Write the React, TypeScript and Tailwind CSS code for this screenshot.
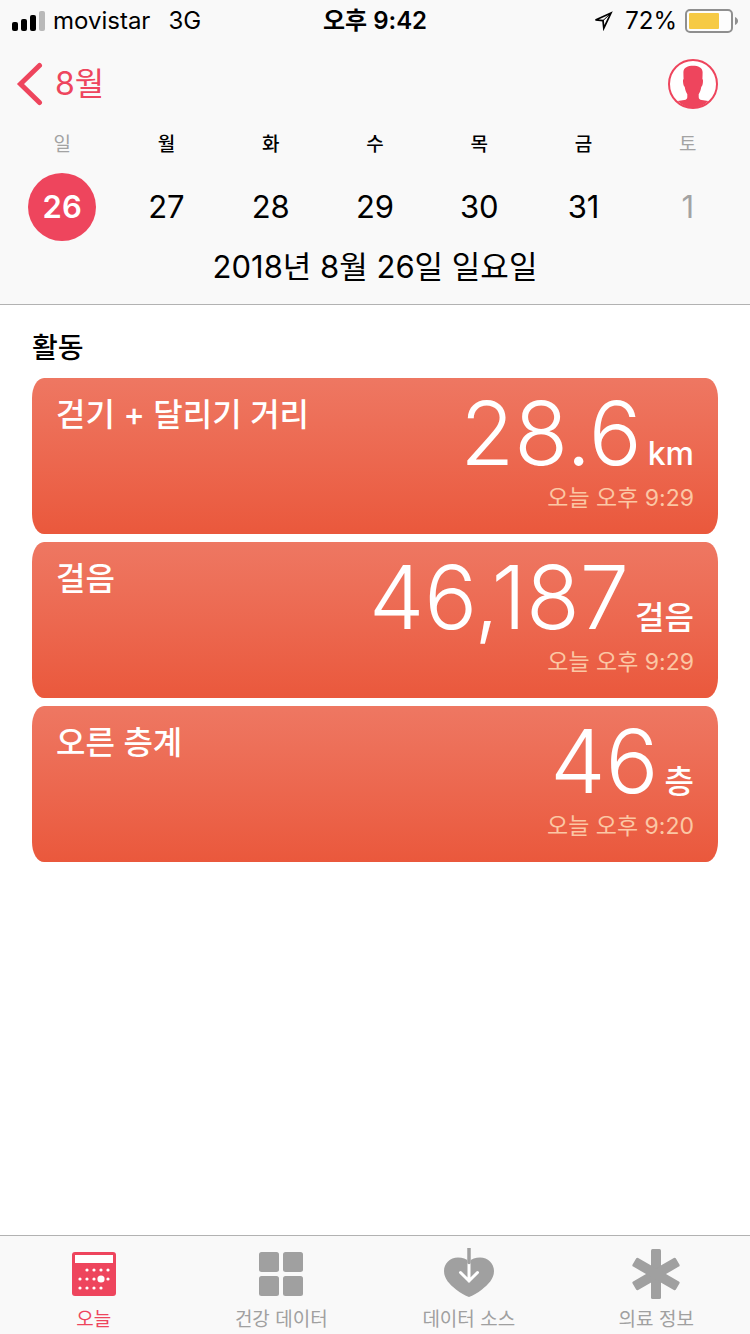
import { useState } from "react";
import type { ReactNode } from "react";

type Day = {
  label: string;
  date: number;
  weekend?: boolean;
  otherMonth?: boolean;
};

type Metric = {
  title: string;
  value: string;
  unit: string;
  time: string;
};

const DAYS: Day[] = [
  { label: "일", date: 26, weekend: true },
  { label: "월", date: 27 },
  { label: "화", date: 28 },
  { label: "수", date: 29 },
  { label: "목", date: 30 },
  { label: "금", date: 31 },
  { label: "토", date: 1, weekend: true, otherMonth: true },
];

const METRICS: Metric[] = [
  { title: "걷기 + 달리기 거리", value: "28.6", unit: "km", time: "오늘 오후 9:29" },
  { title: "걸음", value: "46,187", unit: "걸음", time: "오늘 오후 9:29" },
  { title: "오른 층계", value: "46", unit: "층", time: "오늘 오후 9:20" },
];

function SignalIcon() {
  return (
    <svg width="33" height="20" viewBox="0 0 33 20" aria-hidden="true">
      <rect x="0" y="11" width="6" height="9" rx="2" />
      <rect x="9" y="8" width="6" height="12" rx="2" />
      <rect x="18" y="4" width="6" height="16" rx="2" />
      <rect x="27" y="0" width="6" height="20" rx="2" fill="#b9b9b9" />
    </svg>
  );
}

function LocationIcon() {
  return (
    <svg width="20" height="20" viewBox="0 0 20 20" fill="none" aria-hidden="true">
      <path d="M18 2 2.500 9l7.500.6.800 7.600L18 2Z" stroke="#000" strokeWidth="1.700" />
      <path d="M10 9.600 17 3" stroke="#000" strokeWidth="1" />
    </svg>
  );
}

function BatteryIcon() {
  return (
    <svg width="53" height="24" viewBox="0 0 53 24" aria-hidden="true">
      <rect x="1" y="1" width="46" height="22" rx="4" fill="#fdfdfd" stroke="#8f8f8f" strokeWidth="2" />
      <rect x="4" y="4" width="30" height="16" rx="1" fill="#f6ca45" />
      <path d="M50 8c4 1.500 4 6.500 0 8Z" fill="#8f8f8f" />
    </svg>
  );
}

function ProfileIcon() {
  return (
    <svg width="50" height="50" viewBox="0 0 50 50" aria-hidden="true">
      <circle cx="25" cy="25" r="24" fill="#fff" stroke="#ee455d" strokeWidth="2" />
      <path
        d="M25 6.800C20 6.800 15.600 8.500 15.400 13c-.1 2.500.2 4.800.2 7-.7.300-.7 1.800-.5 3.600.2 2.200.7 3.800 1.600 4.200.4 2.800 1.200 5.200 2.600 7.400v2.700c0 1.800-1 2.600-3 3.100-2.200.6-4.300.6-6.600 1A24 24 0 0 0 25 49a24 24 0 0 0 15.300-7c-2.300-.4-4.400-.4-6.600-1-2-.5-3-1.300-3-3.100v-2.700c1.400-2.200 2.200-4.600 2.600-7.400.9-.4 1.400-2 1.600-4.200.2-1.800.2-3.300-.5-3.600 0-2.200.3-4.500.2-7C34.400 8.500 30 6.800 25 6.800Z"
        fill="#ee455d"
      />
    </svg>
  );
}

function CalendarIcon() {
  const dots = [
    [15, 18], [22, 18], [29, 18], [36, 18],
    [8, 27], [15, 27], [22, 27], [36, 27],
    [8, 36], [15, 36], [22, 36], [29, 36],
  ];
  return (
    <svg width="44" height="44" viewBox="0 0 44 44" fill="currentColor" aria-hidden="true">
      <rect width="44" height="44" rx="3" />
      <rect x="3" y="3" width="38" height="8" fill="#fff" />
      {dots.map(([x, y]) => (
        <circle key={`${x}-${y}`} cx={x} cy={y} r="1.600" fill="#fff" />
      ))}
      <circle cx="29" cy="27" r="3.600" fill="#fff" />
    </svg>
  );
}

function GridIcon() {
  return (
    <svg width="44" height="44" viewBox="0 0 44 44" fill="currentColor" aria-hidden="true">
      <rect width="20" height="20" rx="2.500" />
      <rect x="24" width="20" height="20" rx="2.500" />
      <rect y="24" width="20" height="20" rx="2.500" />
      <rect x="24" y="24" width="20" height="20" rx="2.500" />
    </svg>
  );
}

function HeartIcon() {
  return (
    <svg width="50" height="52" viewBox="0 0 50 52" fill="none" aria-hidden="true">
      <path
        d="M25 13.500C22.500 11 18.500 9.500 14 9.500 6 9.500 0 15.500 0 23c0 8 6 13.500 12 18.500 4.500 3.700 9 6 13 7.500 4-1.500 8.500-3.800 13-7.500C44 36.500 50 31 50 23c0-7.500-6-13.500-14-13.500-4.500 0-8.500 1.500-11 4Z"
        fill="currentColor"
      />
      <path d="M25 11v22M16.500 24.500l8.500 8.500 8.500-8.500" stroke="#fff" strokeWidth="3" strokeLinecap="round" />
      <path d="M25 0.500v14" stroke="currentColor" strokeWidth="3.500" strokeLinecap="round" />
    </svg>
  );
}

function AsteriskIcon() {
  return (
    <svg width="50" height="50" viewBox="0 0 50 50" fill="currentColor" aria-hidden="true">
      <rect x="20" y="0" width="10" height="50" rx="1.500" />
      <rect x="20" y="0" width="10" height="50" rx="1.500" transform="rotate(60 25 25)" />
      <rect x="20" y="0" width="10" height="50" rx="1.500" transform="rotate(-60 25 25)" />
    </svg>
  );
}

const TABS: { label: string; icon: ReactNode }[] = [
  { label: "오늘", icon: <CalendarIcon /> },
  { label: "건강 데이터", icon: <GridIcon /> },
  { label: "데이터 소스", icon: <HeartIcon /> },
  { label: "의료 정보", icon: <AsteriskIcon /> },
];

function StatusBar() {
  return (
    <div className="grid h-[42px] grid-cols-3 items-center px-3 text-2xl">
      <div className="flex items-center gap-2">
        <SignalIcon />
        <span>movistar</span>
        <span className="pl-2.5">3G</span>
      </div>
      <div className="text-center font-semibold">오후 9:42</div>
      <div className="flex items-center justify-end gap-2">
        <LocationIcon />
        <span className="pl-1">72%</span>
        <BatteryIcon />
      </div>
    </div>
  );
}

function MetricCard({ metric }: { metric: Metric }) {
  return (
    <button
      type="button"
      className="flex w-full items-start justify-between rounded-[12px/20px] bg-linear-to-b from-[#ee7762] to-[#ea583c] px-6 pt-2.5 pb-5 text-left text-white"
    >
      <span className="pt-[9px] text-[32px] leading-[36px] font-medium">{metric.title}</span>
      <span className="flex flex-col items-end">
        <span className="flex items-baseline gap-1.5">
          <span className="text-[88px] leading-[90px] font-light">{metric.value}</span>
          <span className="text-[32px] leading-[36px] font-medium">{metric.unit}</span>
        </span>
        <span className="mt-1 text-[23px] leading-8 text-[#fbc7a4]">{metric.time}</span>
      </span>
    </button>
  );
}

export default function App() {
  const [selected, setSelected] = useState(26);
  const [tab, setTab] = useState("오늘");

  return (
    <div className="flex min-h-screen flex-col bg-white font-[Inter,'Noto_Sans_CJK_KR',sans-serif] text-black">
      <header className="border-b border-[#b2b2b2] bg-[#f9f9f9]">
        <StatusBar />
        <div className="flex h-[84px] items-center justify-between pr-8 pl-4">
          <button type="button" className="flex items-center gap-3 text-[32px] text-[#ee455d]">
            <svg width="27" height="44" viewBox="0 0 27 44" fill="none" aria-hidden="true">
              <path
                d="M23.500 3.500 4.500 22l19 18.500"
                stroke="currentColor"
                strokeWidth="5"
                strokeLinecap="round"
                strokeLinejoin="miter"
              />
            </svg>
            8월
          </button>
          <button type="button" aria-label="프로필">
            <ProfileIcon />
          </button>
        </div>

        <div className="grid grid-cols-7 px-2.5">
          {DAYS.map((day) => (
            <div key={day.date} className="flex flex-col items-center gap-[9px]">
              <span
                className={
                  day.weekend
                    ? "text-[19px] leading-[38px] text-[#a3a3a3]"
                    : "text-[19px] leading-[38px] font-medium"
                }
              >
                {day.label}
              </span>
              <button
                type="button"
                onClick={() => setSelected(day.date)}
                className={
                  day.date === selected
                    ? "size-[68px] rounded-full bg-[#ee455d] text-[31px] font-semibold text-white"
                    : day.otherMonth
                      ? "size-[68px] rounded-full text-[31px] text-[#a3a3a3]"
                      : "size-[68px] rounded-full text-[31px]"
                }
              >
                {day.date}
              </button>
            </div>
          ))}
        </div>
        <p className="pt-1.5 pb-[17px] text-center text-[31px] leading-10">2018년 8월 26일 일요일</p>
      </header>

      <main className="flex-1 px-8 pt-[25px]">
        <h2 className="text-[28px] leading-9 font-medium">활동</h2>
        <div className="mt-3 flex flex-col gap-2">
          {METRICS.map((metric) => (
            <MetricCard key={metric.title} metric={metric} />
          ))}
        </div>
      </main>

      <nav className="grid grid-cols-4 border-t border-[#b2b2b2] bg-[#f9f9f9] pt-3 pb-0.5">
        {TABS.map(({ label, icon }) => (
          <button
            key={label}
            type="button"
            onClick={() => setTab(label)}
            className={
              label === tab
                ? "flex flex-col items-center gap-2 text-[#ee455d]"
                : "flex flex-col items-center gap-2 text-[#a0a0a0]"
            }
          >
            <span className="flex h-[52px] items-center">{icon}</span>
            <span className="text-[19px] leading-6">{label}</span>
          </button>
        ))}
      </nav>
    </div>
  );
}
